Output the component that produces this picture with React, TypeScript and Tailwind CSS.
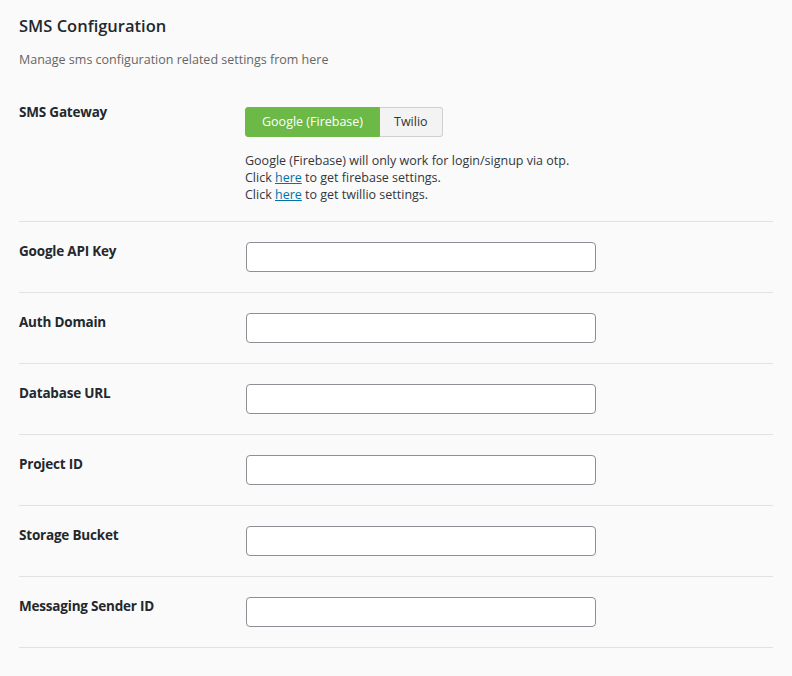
import React, { useState } from 'react';

type Field = { id: string; label: string };

const FIREBASE_FIELDS: Field[] = [
  { id: 'apiKey', label: 'Google API Key' },
  { id: 'authDomain', label: 'Auth Domain' },
  { id: 'databaseURL', label: 'Database URL' },
  { id: 'projectId', label: 'Project ID' },
  { id: 'storageBucket', label: 'Storage Bucket' },
  { id: 'messagingSenderId', label: 'Messaging Sender ID' },
];

const GATEWAYS = [
  { id: 'firebase', label: 'Google (Firebase)' },
  { id: 'twilio', label: 'Twilio' },
];

const SettingRow = ({ label, children }: { label: string; children: React.ReactNode }) => (
  <div className="grid grid-cols-[227px_1fr] border-b border-[#e2e2e2] py-5">
    <div className="text-[13.5px] font-bold leading-[19px] tracking-[-0.2px] text-[#23282d]">{label}</div>
    <div>{children}</div>
  </div>
);

const App = () => {
  const [gateway, setGateway] = useState('firebase');
  const [values, setValues] = useState<Record<string, string>>({});

  return (
    <div className="min-h-screen bg-[#fafafa] px-[19px] pt-[14px] font-['Open_Sans',sans-serif] text-[#32373c]">
      <h2 className="text-[16.5px] font-semibold leading-[24px] text-[#23282d]">SMS Configuration</h2>
      <p className="mt-[13px] mb-[14px] text-[12.5px] leading-[18px] text-[#666]">
        Manage sms configuration related settings from here
      </p>

      <SettingRow label="SMS Gateway">
        <div className="-ml-px">
          <div className="flex pt-[4px]">
            {GATEWAYS.map((g, i) => (
              <button
                key={g.id}
                onClick={() => setGateway(g.id)}
                className={`h-[30px] border text-[12.5px] ${i === 0 ? 'rounded-l-[3px] px-[16px]' : 'rounded-r-[3px] border-l-0 px-[14px]'} ${
                  gateway === g.id
                    ? 'border-[#6cb948] bg-[#6cb948] text-white'
                    : 'border-[#d0d0d0] bg-[#f3f3f3] text-[#333]'
                }`}
              >
                {g.label}
              </button>
            ))}
          </div>
          <div className="mt-[15px] -mb-[2px] text-[12.5px] leading-[17px] text-[#32373c]">
            <p>Google (Firebase) will only work for login/signup via otp.</p>
            <p>
              Click <a href="#" className="text-[#0073aa] underline">here</a> to get firebase settings.
            </p>
            <p>
              Click <a href="#" className="text-[#0073aa] underline">here</a> to get twillio settings.
            </p>
          </div>
        </div>
      </SettingRow>

      {FIREBASE_FIELDS.map(f => (
        <SettingRow key={f.id} label={f.label}>
          <input
            type="text"
            value={values[f.id] || ''}
            onChange={e => setValues({ ...values, [f.id]: e.target.value })}
            className="h-[30px] w-[350px] rounded-[4px] border border-[#8c8f94] bg-white px-2 text-[13px] outline-none"
          />
        </SettingRow>
      ))}
    </div>
  );
};

export default App;
